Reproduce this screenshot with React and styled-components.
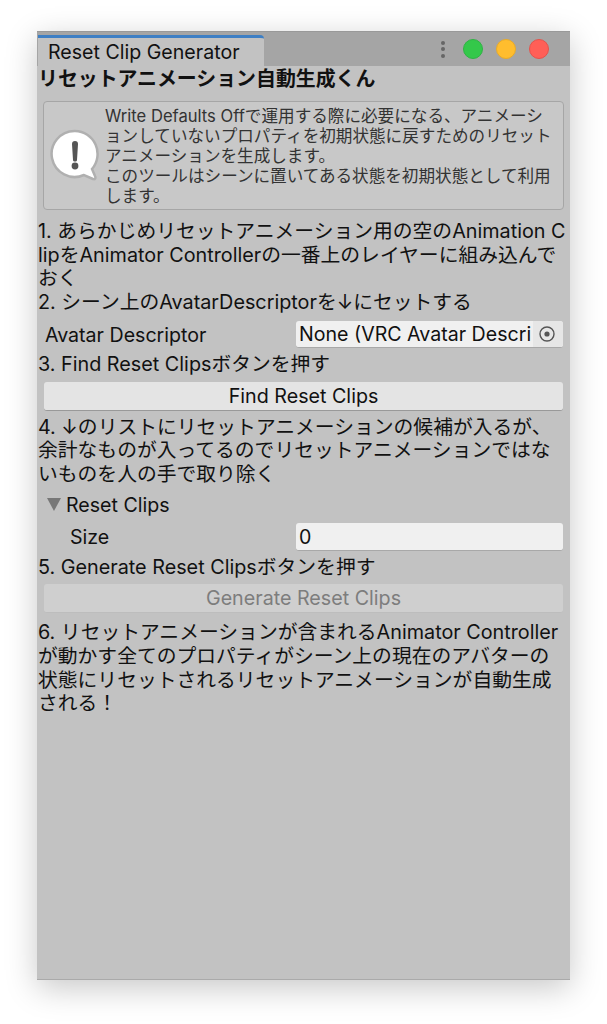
import React from "react";
import styled, { createGlobalStyle } from "styled-components";

const Global = createGlobalStyle`
  html, body { margin: 0; padding: 0; background: #fff; }
  body { font-family: "Inter", "Noto Sans CJK JP", sans-serif; }
`;

const Page = styled.div`
  width: 607px;
  height: 1024px;
  padding: 31px 37px 44px;
  box-sizing: border-box;
  overflow: hidden;
`;

const Window = styled.div`
  width: 533px;
  height: 949px;
  background: #c2c2c2;
  box-shadow: 0 8px 30px rgba(0, 0, 0, 0.22);
  border-bottom: 1px solid #aaa;
  box-sizing: border-box;
  display: flex;
  flex-direction: column;
`;

const TabBar = styled.div`
  height: 35px;
  flex: none;
  background: #a5a5a5;
  border-top: 1px solid #999;
  box-sizing: border-box;
  display: flex;
  align-items: flex-end;
  justify-content: space-between;
`;

const Tab = styled.div`
  width: 226px;
  height: 31px;
  margin-left: 1px;
  background: #c2c2c2;
  border-top: 3px solid #3e7fc4;
  border-top-right-radius: 4px;
  box-sizing: border-box;
  padding-left: 10px;
  font-size: 19.6px;
  line-height: 29px;
  color: #111;
  white-space: nowrap;
`;

const Controls = styled.div`
  align-self: center;
  display: flex;
  align-items: center;
  gap: 13px;
  padding-right: 21px;
`;

const Dots = styled.div`
  width: 4px;
  display: flex;
  flex-direction: column;
  gap: 2.5px;
  margin-right: 5px;
  & > i {
    display: block;
    width: 4px;
    height: 4px;
    border-radius: 50%;
    background: #666;
  }
`;

const Light = styled.div`
  width: 20px;
  height: 20px;
  border-radius: 50%;
  background: ${(p) => p.$color};
  border: 1px solid ${(p) => p.$edge};
  box-sizing: border-box;
`;

const Body = styled.div`
  padding: 0 6px 0 1px;
  display: flex;
  flex-direction: column;
  color: #111;
`;

const Title = styled.div`
  font-weight: 700;
  font-size: 19.9px;
  line-height: 24px;
  margin-top: 1px;
  white-space: nowrap;
`;

const Para = styled.div`
  font-size: 19.8px;
  line-height: 23.7px;
  white-space: nowrap;
`;

const HelpBox = styled.div`
  margin: 10px 0 10px 5px;
  width: 521px;
  height: 109px;
  box-sizing: border-box;
  border: 1px solid #a6a6a6;
  border-radius: 4px;
  background: #c8c8c8;
  display: flex;
  align-items: center;
  padding-left: 5px;
  gap: 4px;
`;

const HelpText = styled.div`
  font-size: 16.6px;
  line-height: 20px;
  color: #333;
  white-space: nowrap;
`;

const Field = styled.div`
  display: flex;
  align-items: center;
  box-sizing: border-box;
  height: ${(p) => p.$height}px;
  padding-top: 2px;
  padding-left: ${(p) => p.$indent}px;
  font-size: 19.6px;
`;

const FieldLabel = styled.div`
  width: ${(p) => p.$width}px;
  flex: none;
  white-space: nowrap;
`;

const ObjectInput = styled.div`
  width: 267px;
  height: 27px;
  display: flex;
  border-radius: 3px;
  border-bottom: 1px solid #a8a8a8;
  background: #f0f0f0;
  box-sizing: border-box;
  overflow: hidden;
`;

const ObjectName = styled.div`
  flex: 1;
  padding-left: 3px;
  line-height: 27px;
  white-space: nowrap;
  overflow: hidden;
`;

const Picker = styled.div`
  width: 30px;
  flex: none;
  box-sizing: border-box;
  padding-right: 3px;
  background: #e6e6e6;
  display: flex;
  align-items: center;
  justify-content: center;
`;

const NumberInput = styled(ObjectInput)`
  height: 28px;
  padding-left: 3px;
  line-height: 28px;
`;

const Button = styled.div`
  margin: ${(p) => (p.$disabled ? "5px 0 8px 6px" : "5px 0 5px 6px")};
  width: 519px;
  height: 29px;
  box-sizing: border-box;
  border-radius: 3px;
  border-bottom: 1px solid ${(p) => (p.$disabled ? "#bdbdbd" : "#999")};
  background: ${(p) => (p.$disabled ? "#cfcfcf" : "#e4e4e4")};
  color: ${(p) => (p.$disabled ? "#7d7d7d" : "#111")};
  text-align: center;
  font-size: 19.7px;
  line-height: 29px;
`;

const Foldout = styled.div`
  display: flex;
  align-items: center;
  height: 24px;
  margin-top: 6px;
  padding-left: 9px;
  font-size: 19.6px;
  gap: 5px;
`;

const Arrow = styled.div`
  width: 0;
  height: 0;
  border-left: 7.5px solid transparent;
  border-right: 7.5px solid transparent;
  border-top: 13px solid #777;
`;

const InfoIcon = () => (
  <svg width="52" height="56" viewBox="0 0 52 56">
    <path
      d="M26 3a23 23 0 1 0 9 44l9 4c2 1 3-1 2-3l-3-7A23 23 0 0 0 26 3z"
      fill="#fff"
      stroke="#b0b0b0"
      strokeWidth="2.5"
    />
    <path d="M26 13c-2 0-3 1-3 3l1 16c0 2 4 2 4 0l1-16c0-2-1-3-3-3z" fill="#555" />
    <circle cx="26" cy="38" r="3.4" fill="#555" />
  </svg>
);

const PickerIcon = () => (
  <svg width="18" height="18" viewBox="0 0 18 18">
    <circle cx="9" cy="9" r="7" fill="none" stroke="#555" strokeWidth="1.4" />
    <circle cx="9" cy="9" r="2.6" fill="#555" />
  </svg>
);

export default function App() {
  return (
    <Page>
      <Global />
      <Window>
        <TabBar>
          <Tab>Reset Clip Generator</Tab>
          <Controls>
            <Dots>
              <i />
              <i />
              <i />
            </Dots>
            <Light $color="#34c84a" $edge="#2fb344" />
            <Light $color="#ffbd2e" $edge="#e9ab28" />
            <Light $color="#ff5f57" $edge="#e5524b" />
          </Controls>
        </TabBar>
        <Body>
          <Title>リセットアニメーション自動生成くん</Title>
          <HelpBox>
            <InfoIcon />
            <HelpText>
              Write Defaults Offで運用する際に必要になる、アニメーシ
              <br />
              ョンしていないプロパティを初期状態に戻すためのリセット
              <br />
              アニメーションを生成します。
              <br />
              このツールはシーンに置いてある状態を初期状態として利用
              <br />
              します。
            </HelpText>
          </HelpBox>
          <Para>
            1. あらかじめリセットアニメーション用の空のAnimation C
            <br />
            lipをAnimator Controllerの一番上のレイヤーに組み込んで
            <br />
            おく
            <br />
            2. シーン上のAvatarDescriptorを↓にセットする
          </Para>
          <Field $indent={7} $height={38}>
            <FieldLabel $width={251}>Avatar Descriptor</FieldLabel>
            <ObjectInput>
              <ObjectName>None (VRC Avatar Descri</ObjectName>
              <Picker>
                <PickerIcon />
              </Picker>
            </ObjectInput>
          </Field>
          <Para>3. Find Reset Clipsボタンを押す</Para>
          <Button>Find Reset Clips</Button>
          <Para>
            4. ↓のリストにリセットアニメーションの候補が入るが、
            <br />
            余計なものが入ってるのでリセットアニメーションではな
            <br />
            いものを人の手で取り除く
          </Para>
          <Foldout>
            <Arrow />
            Reset Clips
          </Foldout>
          <Field $indent={32} $height={39}>
            <FieldLabel $width={226}>Size</FieldLabel>
            <NumberInput>0</NumberInput>
          </Field>
          <Para>5. Generate Reset Clipsボタンを押す</Para>
          <Button $disabled>Generate Reset Clips</Button>
          <Para>
            6. リセットアニメーションが含まれるAnimator Controller
            <br />
            が動かす全てのプロパティがシーン上の現在のアバターの
            <br />
            状態にリセットされるリセットアニメーションが自動生成
            <br />
            される！
          </Para>
        </Body>
      </Window>
    </Page>
  );
}
